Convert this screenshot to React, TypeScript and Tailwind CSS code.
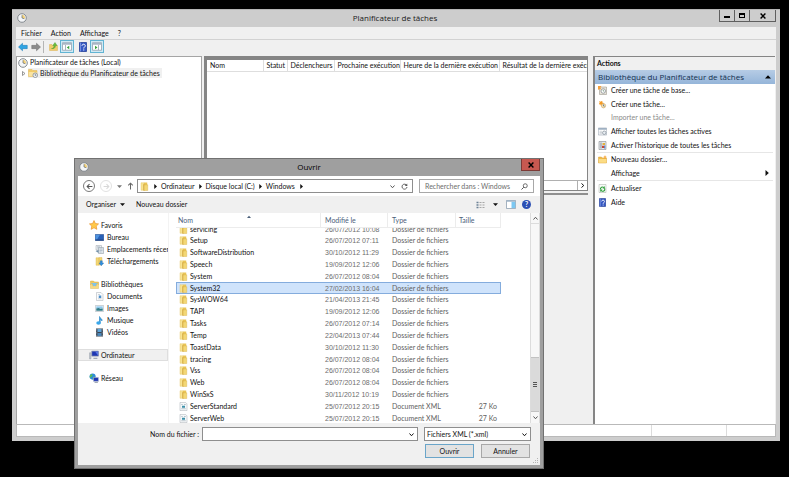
import { clsx } from "clsx";
import * as React from "react";
import { useState } from "react";

type IconProps = { className?: string };

function ClockIcon({ className = "size-[10px]" }: IconProps) {
	return (
		<svg viewBox="0 0 20 20" className={clsx("shrink-0", className)}>
			<circle cx="10" cy="10" r="8.6" fill="#f4f6f8" stroke="#858b90" strokeWidth="2" />
			<path d="M10 10V3.5a6.5 6.5 0 0 1 6 8z" fill="#f3d27c" />
			<path d="M10 4.5V10l4.5 1.5" fill="none" stroke="#5f6a76" strokeWidth="1.4" />
		</svg>
	);
}

function FolderIcon({ className = "size-[9px]" }: IconProps) {
	return (
		<svg viewBox="0 0 18 18" className={clsx("shrink-0", className)}>
			<path d="M2 1.500h6l1 15H2z" fill="#f8e493" stroke="#e2c25c" strokeWidth=".8" />
			<path d="M8 1h6.500v7H8z" fill="#e9c456" />
			<path d="M7.500 6l8-.5V17H7.500z" fill="#f3d774" stroke="#d6ad41" strokeWidth=".8" />
			<path d="M7.500 4v13" stroke="#c99c33" strokeWidth="1.200" />
		</svg>
	);
}

function TaskFolderIcon({ className = "size-[10px]" }: IconProps) {
	return (
		<svg viewBox="0 0 20 20" className={clsx("shrink-0", className)}>
			<path d="M1 3h7l2 2h8v12H1z" fill="#f2cb68" stroke="#dcb255" />
			<path d="M1.5 8h16v8.5h-16z" fill="#fae4a0" />
			<circle cx="14.5" cy="14.5" r="4.6" fill="#eef2f5" stroke="#788088" strokeWidth="1.4" />
			<path d="M14.5 11.8v3h2" fill="none" stroke="#4a5560" strokeWidth="1.2" />
		</svg>
	);
}

function NewFolderIcon({ className = "size-[9px]" }: IconProps) {
	return (
		<svg viewBox="0 0 18 18" className={clsx("shrink-0", className)}>
			<path d="M1 4h6l2 2h8v10H1z" fill="#eebb4a" stroke="#dca23a" />
			<path d="M2 8h14.5v7.5H2z" fill="#fbdc85" />
			<path d="M14 0l1 3 3 1-3 1-1 3-1-3-3-1 3-1z" fill="#f59b25" />
		</svg>
	);
}

function ArrowIcon({ back, className = "size-[10px]" }: IconProps & { back?: boolean }) {
	return (
		<svg viewBox="0 0 20 20" className={clsx("shrink-0", className)}>
			{back ? (
				<path d="M1 10l8-7.5v4.2h9.5v6.6H9v4.2z" fill="#2fa4e3" stroke="#1776b5" />
			) : (
				<path d="M19 10l-8-7.5v4.2H1.5v6.6H11v4.2z" fill="#8c8c8c" stroke="#6d6d6d" />
			)}
		</svg>
	);
}

function UpFolderIcon() {
	return (
		<svg viewBox="0 0 18 18" className="size-[9px] shrink-0">
			<path d="M1 5h5l2 2h9v10H1z" fill="#f0cc6c" stroke="#dcb255" />
			<path d="M5 13c4 0 5-3 5-6H7.500L12 1l4 6h-3c0 5-3 7-8 6z" fill="#6abf3a" stroke="#43932a" strokeWidth=".8" />
		</svg>
	);
}

function PaneIcon({ flip }: { flip?: boolean }) {
	return (
		<svg viewBox="0 0 20 18" className="h-[9px] w-[10px] shrink-0">
			<path d="M1 1.500h18v15H1z" fill="#fff" stroke="#8795a5" strokeWidth="1.4" />
			<path d="M1 1.500h18v4H1z" fill="#a8b6c5" />
			<path d={flip ? "M13 6v10" : "M7 6v10"} stroke="#8795a5" strokeWidth="1.400" />
			<path d={flip ? "M6 7.500l5 3.500-5 3.500z" : "M14.500 7.500l-5 3.500 5 3.500z"} fill="#3aa23a" />
		</svg>
	);
}

function HelpIcon({ className = "h-[10px] w-2" }: IconProps) {
	return (
		<svg viewBox="0 0 16 20" className={clsx("shrink-0", className)}>
			<path d="M1 1h14v18H1z" fill="#3558c4" stroke="#1e3a94" strokeWidth="1.500" />
			<path d="M3 1v18" stroke="#8aa2ea" strokeWidth="1.500" />
			<path d="M6 7.500c0-4 6.500-4 6.500 0 0 2.500-3 2.500-3 5.500M9.500 14.800v2.200" fill="none" stroke="#fff" strokeWidth="2" />
		</svg>
	);
}

function WizardTaskIcon() {
	return (
		<svg viewBox="0 0 18 18" className="size-[9px] shrink-0">
			<path d="M3 2h14v15H3z" fill="#e9e4d8" stroke="#8f8a80" />
			<circle cx="10.500" cy="10" r="4.500" fill="#fff" stroke="#7c848c" strokeWidth="1.400" />
			<path d="M10.500 7.500V10l2 1.500" fill="none" stroke="#475" strokeWidth="1.200" />
			<path d="M0 0h7L4.500 3.500 7 7 3 6 0 8z" fill="#f2a03e" />
		</svg>
	);
}

function NewTaskIcon() {
	return (
		<svg viewBox="0 0 18 18" className="size-[9px] shrink-0">
			<path d="M3 3l3 1 2-2 .5 3.500L12 7 8 8.500 7 12 5 8.500 2 8l2-2z" fill="#f59a23" stroke="#f59a23" />
			<circle cx="11" cy="11.500" r="4.300" fill="#f5dfae" stroke="#c9a566" strokeWidth="1.200" />
			<path d="M11 9v3l2 .5" fill="none" stroke="#2d5d92" strokeWidth="1.300" />
		</svg>
	);
}

function RunningTasksIcon() {
	return (
		<svg viewBox="0 0 18 18" className="size-[9px] shrink-0">
			<path d="M.7 2h16.600v14H.7z" fill="#fff" stroke="#8593a3" />
			<path d="M.7 2h16.600v3.500H.7z" fill="#9fb0c2" />
			<path d="M3 8.500h5M3 11h5M3 13.500h5" stroke="#a0aab5" />
			<circle cx="12.500" cy="11.500" r="3.500" fill="#e8edf2" stroke="#6f7a86" strokeWidth="1.200" />
		</svg>
	);
}

function HistoryIcon() {
	return (
		<svg viewBox="0 0 18 18" className="size-[9px] shrink-0">
			<path d="M2 1h14v16H2z" fill="#e6e9ed" stroke="#85898e" strokeWidth="1.200" />
			<path d="M4 3h4v12H4z" fill="#b4bbc3" />
			<path d="M9 4h5v4H9z" fill="#e0b23c" />
			<path d="M8 9.500h4.500V14H8z" fill="#c74634" />
			<path d="M12.500 9h2v6h-2z" fill="#3c6fc0" />
		</svg>
	);
}

function RefreshIcon() {
	return (
		<svg viewBox="0 0 18 18" className="size-[9px] shrink-0">
			<path d="M2 1h14v16H2z" fill="#f7faf7" stroke="#a5aca5" />
			<path d="M5 11a4 4 0 0 1 7-3.500M13 8.500a4 4 0 0 1-7 4" fill="none" stroke="#2e9e3b" strokeWidth="2.200" />
			<path d="M13.500 4v5H9zM4.500 16v-5H9z" fill="#2e9e3b" />
		</svg>
	);
}

function StarIcon() {
	return (
		<svg viewBox="0 0 18 18" className="size-[10px] shrink-0">
			<path d="M9 1l2.500 5.300 5.700.7-4.200 4 1.100 5.800L9 14l-5.100 2.800L5 11 .8 7l5.700-.7z" fill="#ffc94a" stroke="#e8912a" strokeWidth="1.200" />
		</svg>
	);
}

function DesktopIcon() {
	return (
		<svg viewBox="0 0 18 18" className="size-[9px] shrink-0">
			<path d="M.5 3h17v12H.5z" fill="#2861b8" stroke="#1d3f7c" />
			<path d="M1 3.500h9L4 13H1z" fill="#4f93df" />
			<path d="M1 13h16v2H1z" fill="#24467f" />
		</svg>
	);
}

function RecentIcon() {
	return (
		<svg viewBox="0 0 18 18" className="size-[9px] shrink-0">
			<path d="M2 1h11v9H2z" fill="#eef1f4" stroke="#98a1aa" />
			<path d="M7 5h10v12H7z" fill="#dfe6ec" stroke="#87929d" />
			<path d="M4 3.500h6M4 6h3M9 8h6M9 11h6M9 14h4" stroke="#8ea0b2" />
			<path d="M1 12l6-2v6z" fill="#6f8ea8" />
		</svg>
	);
}

function DownloadsIcon() {
	return (
		<svg viewBox="0 0 18 18" className="size-[9px] shrink-0">
			<path d="M2 1.500h6v15H2zM8 1h6v15H8z" fill="#f3d774" stroke="#dcb44d" strokeWidth=".8" />
			<path d="M10.500 7.500h4V12H17.500l-5 5.500L8 12h2.500z" fill="#2f8fe0" stroke="#1a62ab" strokeWidth=".7" />
		</svg>
	);
}

function LibraryIcon() {
	return (
		<svg viewBox="0 0 18 18" className="size-[9px] shrink-0">
			<path d="M1 2h6l2 2h8v5H1z" fill="#efc95f" stroke="#d8ac48" />
			<path d="M3 6h12v6H3z" fill="#7fc3ea" />
			<path d="M1 8h4l1 5h6l1-5h4v9H1z" fill="#f6db83" stroke="#d6ad48" strokeWidth=".8" />
		</svg>
	);
}

function DocumentIcon() {
	return (
		<svg viewBox="0 0 18 18" className="size-[9px] shrink-0">
			<path d="M3 1h9l4 4v12H3z" fill="#fafbfc" stroke="#a4abb2" />
			<path d="M6 5h4M6 13.500h7" stroke="#9fa9b3" />
			<path d="M7.500 7h5v5h-5z" fill="#4d8fca" />
		</svg>
	);
}

function PictureIcon() {
	return (
		<svg viewBox="0 0 18 18" className="size-[9px] shrink-0">
			<path d="M.8 3h16.400v12H.8z" fill="#fff" stroke="#9aa5af" />
			<path d="M2.500 4.700h13v4.500h-13z" fill="#8fc8ec" />
			<path d="M2.500 9l5-1 3 1.500 5-.5v4.500h-13z" fill="#2e7b86" />
		</svg>
	);
}

function MusicIcon() {
	return (
		<svg viewBox="0 0 18 18" className="size-[9px] shrink-0">
			<path d="M9 1c1 4 6 4 5 9-1-2.500-3-3-3.500-3v7.500H9z" fill="#2f9be0" stroke="#2181c4" strokeWidth="1.200" />
			<ellipse cx="7" cy="14" rx="4.500" ry="3.400" fill="#3aa7ea" />
		</svg>
	);
}

function VideoIcon() {
	return (
		<svg viewBox="0 0 18 18" className="size-[9px] shrink-0">
			<path d="M2 1h14v16H2z" fill="#3a4452" />
			<path d="M5 2h8v6H5z" fill="#5fa5d8" />
			<path d="M5 10h8v6H5z" fill="#4a86b8" />
			<path d="M3.500 2v14M14.500 2v14" stroke="#cfd6dd" strokeWidth="1.200" strokeDasharray="1.500 1.500" />
		</svg>
	);
}

function ComputerIcon() {
	return (
		<svg viewBox="0 0 18 18" className="size-[10px] shrink-0">
			<path d="M5 2h12v9H5z" fill="#1f37b4" stroke="#8d98aa" strokeWidth="1.200" />
			<path d="M11 2.500h5.500v8z" fill="#5a79e2" />
			<path d="M8 14h7v2H8z" fill="#97a2b0" />
			<path d="M1 5h2.500v11H1z" fill="#c2c9d1" stroke="#8a949f" strokeWidth=".8" />
		</svg>
	);
}

function NetworkIcon() {
	return (
		<svg viewBox="0 0 18 18" className="size-[10px] shrink-0">
			<circle cx="6.500" cy="6.500" r="5.500" fill="#2d8bdc" />
			<path d="M3 3c3-2 4 0 3 2S3 7 2 9C1 7 1 5 3 3zM7 8l4-2-1 4-3 2z" fill="#5cc04c" />
			<path d="M8 8h9v7H8z" fill="#1f37b4" stroke="#b4bdc8" />
			<path d="M10 17h6" stroke="#8b95a1" strokeWidth="1.500" />
		</svg>
	);
}

function XmlIcon() {
	return (
		<svg viewBox="0 0 18 18" className="size-[9px] shrink-0">
			<path d="M2 .8h11l3 3v13.400H2z" fill="#f7f9fa" stroke="#a2a9b0" />
			<path d="M4.500 5h3M10 5h3.500M4.500 13.500h9" stroke="#8fa1b0" strokeWidth="1.200" />
			<path d="M6 7.500h6v4H6z" fill="#3b8fa8" />
		</svg>
	);
}

function Chevron({ className = "size-[7px]" }: IconProps) {
	return (
		<svg viewBox="0 0 14 14" className={clsx("shrink-0", className)}>
			<path d="M3 5l4 4.500L11 5" fill="none" stroke="currentColor" strokeWidth="2" />
		</svg>
	);
}

function Triangle({ className = "size-[5px]" }: IconProps) {
	return (
		<svg viewBox="0 0 10 10" className={clsx("shrink-0", className)}>
			<path d="M0 2.500h10L5 8z" fill="currentColor" />
		</svg>
	);
}

const taskColumns = [
	{ label: "Nom", width: "w-[56px]" },
	{ label: "Statut", width: "w-6" },
	{ label: "Déclencheurs", width: "w-[47px]" },
	{ label: "Prochaine exécution", width: "w-[66px]" },
	{ label: "Heure de la dernière exécution", width: "w-[99px]" },
	{ label: "Résultat de la dernière exécution", width: "w-[110px]" },
];

const files = [
	["servicing", "26/07/2012 10:08"],
	["Setup", "26/07/2012 07:11"],
	["SoftwareDistribution", "30/10/2012 11:29"],
	["Speech", "19/09/2012 12:06"],
	["System", "26/07/2012 08:04"],
	["System32", "27/02/2013 16:04"],
	["SysWOW64", "21/04/2013 21:45"],
	["TAPI", "19/09/2012 12:06"],
	["Tasks", "26/07/2012 07:14"],
	["Temp", "22/04/2013 07:44"],
	["ToastData", "30/10/2012 11:30"],
	["tracing", "26/07/2012 08:04"],
	["Vss", "26/07/2012 08:04"],
	["Web", "26/07/2012 08:04"],
	["WinSxS", "30/11/2012 10:19"],
	["ServerStandard", "25/07/2012 20:15", "27 Ko"],
	["ServerWeb", "25/07/2012 20:15", "27 Ko"],
];

const places = [
	{
		label: "Favoris",
		icon: <StarIcon />,
		items: [
			{ label: "Bureau", icon: <DesktopIcon /> },
			{ label: "Emplacements récents", icon: <RecentIcon /> },
			{ label: "Téléchargements", icon: <DownloadsIcon /> },
		],
	},
	{
		label: "Bibliothèques",
		icon: <LibraryIcon />,
		items: [
			{ label: "Documents", icon: <DocumentIcon /> },
			{ label: "Images", icon: <PictureIcon /> },
			{ label: "Musique", icon: <MusicIcon /> },
			{ label: "Vidéos", icon: <VideoIcon /> },
		],
	},
	{ label: "Ordinateur", icon: <ComputerIcon />, items: [], active: true },
	{ label: "Réseau", icon: <NetworkIcon />, items: [] },
];

function ActionItem({
	icon,
	children,
	disabled,
	submenu,
}: {
	icon?: React.ReactNode;
	children: React.ReactNode;
	disabled?: boolean;
	submenu?: boolean;
}) {
	return (
		<button
			type="button"
			disabled={disabled}
			className="flex min-h-3 w-full items-center gap-1 pl-[2px] text-left disabled:text-[#8a8a8a]"
		>
			<span className="flex w-[10px] shrink-0 justify-center">{icon}</span>
			<span className="flex-1">{children}</span>
			{submenu && <Triangle className="mr-[5px] size-[6px] -rotate-90" />}
		</button>
	);
}

function TaskWindow() {
	return (
		<section className="flex flex-1 flex-col border-t border-[#b5b5b5] bg-[#cdcdcd] px-1 pb-1">
			<header className="flex h-[17px] items-start">
				<ClockIcon className="mt-[3px] ml-px size-[10px]" />
				<h1 className="flex-1 pt-[2px] pl-[44px] text-center font-['Open_Sans',sans-serif] text-[8px] leading-[11px] text-[#1a1a1a]">
					Planificateur de tâches
				</h1>
				<div className="flex h-3 border border-t-0 border-[#5f5f5f] text-black">
					<button type="button" aria-label="Réduire" className="flex w-[15px] items-end justify-center border-r border-[#5f5f5f] pb-[3px]">
						<span className="h-[2px] w-[6px] bg-black" />
					</button>
					<button type="button" aria-label="Agrandir" className="flex w-[15px] items-center justify-center border-r border-[#5f5f5f]">
						<span className="h-[5px] w-[6px] border border-t-2 border-black" />
					</button>
					<button type="button" aria-label="Fermer" className="flex w-[25px] items-center justify-center">
						<svg viewBox="0 0 10 10" className="size-[6px]">
							<path d="M1 1l8 8M9 1L1 9" stroke="currentColor" strokeWidth="2.400" />
						</svg>
					</button>
				</div>
			</header>

			<nav className="flex h-[13px] items-center gap-[9px] border-b border-[#d2d2d2] bg-[#f0f0f0] pl-[5px]">
				<button type="button">Fichier</button>
				<button type="button">Action</button>
				<button type="button">Affichage</button>
				<button type="button">?</button>
			</nav>

			<div className="flex h-4 items-start bg-[#f0f0f0] pl-[2px]">
				<button type="button" aria-label="Précédent" className="mt-[2px]"><ArrowIcon back /></button>
				<button type="button" aria-label="Suivant" className="mt-[2px] ml-[3px]"><ArrowIcon /></button>
				<span className="mt-px ml-[2px] h-3 w-px bg-[#b5b5b5]" />
				<button type="button" aria-label="Monter" className="mt-[2px] ml-[5px]"><UpFolderIcon /></button>
				<button type="button" aria-label="Arborescence" className="ml-[2px] flex h-[13px] w-[14px] items-center justify-center border border-[#62b4d3] bg-[#cfeaf5]">
					<PaneIcon />
				</button>
				<button type="button" aria-label="Aide" className="mt-[2px] ml-[5px]"><HelpIcon /></button>
				<button type="button" aria-label="Volet Actions" className="ml-[3px] flex h-[13px] w-[14px] items-center justify-center border border-[#62b4d3] bg-[#cfeaf5]">
					<PaneIcon flip />
				</button>
			</div>

			<div className="flex min-h-0 flex-1 bg-[#f0f0f0] pr-px">
				<aside className="w-[186px] shrink-0 border border-b-0 border-[#a5a5a5] bg-white">
					<div className="flex h-[11px] items-center gap-[2px] pl-px">
						<ClockIcon />
						<span>Planificateur de tâches (Local)</span>
					</div>
					<div className="flex h-[10px] items-center pl-[5px]">
						<svg viewBox="0 0 8 10" className="h-[5px] w-1">
							<path d="M1 1l5 4-5 4z" fill="#fff" stroke="#777" strokeWidth="1.500" />
						</svg>
						<span className="ml-[2px] flex items-center gap-[2px] bg-[#f0f0f0] pr-[2px]">
							<TaskFolderIcon />
							<button type="button" className="leading-[10px]">Bibliothèque du Planificateur de tâches</button>
						</span>
					</div>
				</aside>

				<main className="ml-[2px] flex min-w-0 flex-1 flex-col">
					<div className="flex h-[135px] shrink-0 flex-col overflow-hidden border-t-4 border-r border-b border-l-[3px] border-[#858585] bg-white">
						<div className="overflow-hidden">
							<table className="w-[402px] table-fixed">
								<thead>
									<tr>
										{taskColumns.map((column) => (
											<th
												key={column.label}
												className={clsx(
													"h-[11px] overflow-hidden border-r border-b border-[#dedede] p-0 pl-[3px] text-left leading-[10px] font-normal whitespace-nowrap",
													column.width,
												)}
											>
												{column.label}
											</th>
										))}
									</tr>
								</thead>
							</table>
						</div>
						<div className="mt-auto flex h-[10px] justify-end border-t border-[#b0b0b0] bg-white">
							<button type="button" aria-label="Défiler" className="flex w-[10px] items-center justify-center border-l border-[#b0b0b0]">
								<Chevron className="size-[7px] -rotate-90" />
							</button>
						</div>
					</div>
					<div className="mt-[2px] flex-1 border-t-2 border-l-[3px] border-[#8f8f8f]" />
				</main>

				<aside className="ml-[5px] flex w-[182px] shrink-0 flex-col border-t border-l-2 border-[#858585] bg-white">
					<h2 className="h-[13px] bg-[#f0f0f0] pl-[2px] leading-[13px] font-bold">Actions</h2>
					<button
						type="button"
						className="flex h-[14px] items-center justify-between bg-linear-to-b from-[#b6cce5] to-[#95b5d9] pr-1 pl-[3px] font-['Open_Sans',sans-serif] text-[8px] leading-[14px] text-[#14304f]"
					>
						Bibliothèque du Planificateur de tâches
						<Triangle className="size-[6px] rotate-180 text-black" />
					</button>
					<div className="grid h-[68px] auto-rows-fr">
						<ActionItem icon={<WizardTaskIcon />}>Créer une tâche de base...</ActionItem>
						<ActionItem icon={<NewTaskIcon />}>Créer une tâche...</ActionItem>
						<ActionItem disabled>Importer une tâche...</ActionItem>
						<ActionItem icon={<RunningTasksIcon />}>Afficher toutes les tâches actives</ActionItem>
						<ActionItem icon={<HistoryIcon />}>Activer l'historique de toutes les tâches</ActionItem>
					</div>
					<div className="mx-[2px] border-t border-[#e6e6e6]" />
					<div className="grid h-[27px] auto-rows-fr">
						<ActionItem icon={<NewFolderIcon />}>Nouveau dossier...</ActionItem>
						<ActionItem submenu>Affichage</ActionItem>
					</div>
					<div className="mx-[2px] border-t border-[#e6e6e6]" />
					<div className="grid h-7 auto-rows-fr">
						<ActionItem icon={<RefreshIcon />}>Actualiser</ActionItem>
						<ActionItem icon={<HelpIcon className="h-[9px] w-[7px]" />}>Aide</ActionItem>
					</div>
				</aside>
			</div>

			<footer className="flex h-[13px] border border-[#b9b9b9] bg-white">
				<span className="flex-1" />
				<span className="w-[75px] border-l border-[#dcdcdc]" />
				<span className="w-[49px] border-l border-[#dcdcdc]" />
			</footer>
		</section>
	);
}

function AddressBar() {
	return (
		<div className="flex h-5 items-center bg-white pr-[6px] pl-[5px]">
			<button type="button" aria-label="Précédent" className="flex size-3 items-center justify-center rounded-full border border-[#7c7c7c] text-[#555]">
				<svg viewBox="0 0 12 12" className="size-[7px]">
					<path d="M6 2L2 6l4 4M2 6h9" fill="none" stroke="currentColor" strokeWidth="1.800" />
				</svg>
			</button>
			<button type="button" aria-label="Suivant" className="ml-[5px] flex size-3 items-center justify-center rounded-full border border-[#e2e2e2] text-[#d8d8d8]">
				<svg viewBox="0 0 12 12" className="size-[7px]">
					<path d="M6 2l4 4-4 4M10 6H1" fill="none" stroke="currentColor" strokeWidth="1.800" />
				</svg>
			</button>
			<Triangle className="ml-[5px] size-[5px] text-[#777]" />
			<button type="button" aria-label="Monter" className="ml-[5px] text-[#666]">
				<svg viewBox="0 0 12 14" className="h-2 w-[7px]">
					<path d="M2 6l4-4 4 4M6 2v11" fill="none" stroke="currentColor" strokeWidth="1.800" />
				</svg>
			</button>
			<div className="ml-[3px] flex h-[14px] min-w-0 flex-1 items-center border border-[#8e8e8e] pr-1 pl-[2px]">
				<FolderIcon />
				<Triangle className="mr-[3px] ml-1 size-[5px] -rotate-90" />
				<button type="button">Ordinateur</button>
				<Triangle className="mx-[3px] size-[5px] -rotate-90" />
				<button type="button" className="whitespace-nowrap">Disque local (C:)</button>
				<Triangle className="mx-[3px] size-[5px] -rotate-90" />
				<button type="button">Windows</button>
				<Triangle className="mx-1 size-[5px] -rotate-90" />
				<Chevron className="ml-auto size-[7px] text-[#555]" />
				<button type="button" aria-label="Actualiser" className="ml-[5px]">
					<svg viewBox="0 0 14 14" className="size-[7px] text-[#555]">
						<path d="M11.500 5A5 5 0 1 0 12 8" fill="none" stroke="currentColor" strokeWidth="1.800" />
						<path d="M12.500 1v5h-5z" fill="currentColor" />
					</svg>
				</button>
			</div>
			<label className="ml-[6px] flex h-[14px] w-[115px] items-center border border-[#a8a8a8] px-[5px]">
				<input
					type="text"
					aria-label="Rechercher"
					placeholder="Rechercher dans : Windows"
					className="min-w-0 flex-1 outline-none placeholder:text-[#6d6d6d]"
				/>
				<svg viewBox="0 0 14 14" className="size-[7px] shrink-0 text-[#555]">
					<circle cx="8.500" cy="5.500" r="4" fill="none" stroke="currentColor" strokeWidth="1.700" />
					<path d="M5.500 8.500L1 13" stroke="currentColor" strokeWidth="2" />
				</svg>
			</label>
		</div>
	);
}

function OpenDialog() {
	const [selected, setSelected] = useState("System32");

	return (
		<section
			role="dialog"
			aria-label="Ouvrir"
			className="absolute top-[158px] left-[74px] w-[470px] border border-[#717171] bg-[#9f9f9f] px-[3px] pb-[3px]"
		>
			<header className="flex h-[17px] items-start">
				<ClockIcon className="mt-[3px] ml-px size-[10px]" />
				<h2 className="flex-1 pt-[2px] pl-[8px] text-center font-['Open_Sans',sans-serif] text-[8px] leading-[11px] text-black">
					Ouvrir
				</h2>
				<button type="button" aria-label="Fermer" className="flex h-3 w-[19px] items-center justify-center border border-t-0 border-[#7d3a36] bg-[#c75850] text-black">
					<svg viewBox="0 0 10 10" className="size-[6px]">
						<path d="M1 1l8 8M9 1L1 9" stroke="currentColor" strokeWidth="2.400" />
					</svg>
				</button>
			</header>

			<AddressBar />

			<div className="flex h-[17px] items-center bg-[#f0f0f0] pr-[9px] pl-2">
				<button type="button" className="flex items-center gap-[4px]">
					Organiser
					<Triangle />
				</button>
				<button type="button" className="ml-[11px]">Nouveau dossier</button>
				<button type="button" aria-label="Affichage" className="ml-auto flex items-center gap-2">
					<svg viewBox="0 0 18 16" className="h-2 w-[9px]">
						<path d="M1 3h4M1 8h4M1 13h4" stroke="#6d8296" strokeWidth="2.600" />
						<path d="M7 3h4M13 3h4M7 8h4M13 8h4M7 13h4M13 13h4" stroke="#8f8f8f" strokeWidth="1.500" />
					</svg>
					<Triangle />
				</button>
				<button type="button" aria-label="Volet de visualisation" className="ml-2">
					<svg viewBox="0 0 20 18" className="h-[9px] w-[10px]">
						<path d="M1 1h18v16H1z" fill="#fff" stroke="#7f93a8" strokeWidth="1.400" />
						<path d="M11 3.500h7.500V16H11z" fill="#7cc8f2" />
						<path d="M1 1h18v2.500H1z" fill="#9fb4c8" />
					</svg>
				</button>
				<button type="button" aria-label="Aide" className="ml-[6px] flex size-[9px] items-center justify-center rounded-full bg-[#2c50b4] text-[7px] leading-none font-bold text-white">
					?
				</button>
			</div>

			<div className="flex h-[210px] bg-white">
				<nav className="w-[91px] shrink-0 overflow-hidden border-r border-[#f3f3f3] pt-[6px]">
					<ul className="flex flex-col gap-[11px]">
						{places.map((place) => (
							<li key={place.label}>
								<button
									type="button"
									className={clsx(
										"flex h-3 w-full items-center gap-[2px] pl-[11px]",
										place.active && "bg-[#f0f0f0] outline -outline-offset-1 outline-[#dedede]",
									)}
								>
									<span className="flex w-[10px] justify-center">{place.icon}</span>
									{place.label}
								</button>
								{place.items.map((item) => (
									<button
										key={item.label}
										type="button"
										className="flex h-3 w-full items-center gap-[3px] pl-[17px] whitespace-nowrap"
									>
										{item.icon}
										{item.label}
									</button>
								))}
							</li>
						))}
					</ul>
				</nav>

				<div className="min-w-0 flex-1 overflow-hidden pl-[7px]">
					<table className="h-[211px] w-[325px] table-fixed border-separate border-spacing-0">
						<thead>
							<tr className="h-[15px] text-[#4c607a]">
								<th className="w-[145px] border-r border-b border-[#ececec] p-0 pl-[2px] text-left font-normal">
									<span className="flex">
										Nom
										<Triangle className="ml-[54px] size-1 rotate-180" />
									</span>
								</th>
								<th className="w-[67px] border-r border-b border-[#ececec] p-0 pl-1 text-left font-normal">Modifié le</th>
								<th className="w-[68px] border-r border-b border-[#ececec] p-0 pl-1 text-left font-normal">Type</th>
								<th className="w-[45px] border-r border-b border-[#ececec] p-0 pl-[3px] text-left font-normal">Taille</th>
							</tr>
						</thead>
						<tbody>
							{files.map(([name, modified, size], index) => {
								// the first row is scrolled half way under the header
								const clip = index === 0 ? "flex h-[7px] flex-col justify-end overflow-hidden" : "";
								return (
									<tr
										key={name}
										onClick={() => setSelected(name)}
										className={clsx(
											index === 0 && "h-[7px]",
											name === selected && "bg-[#cfe3fb] outline -outline-offset-1 outline-[#84acdd]",
										)}
									>
										<td className="p-0 pl-[3px]">
											<div className={clip}>
												<span className="flex items-center gap-[2px] leading-[11px]">
													{size ? <XmlIcon /> : <FolderIcon />}
													{name}
												</span>
											</div>
										</td>
										<td className="p-0 pl-1 font-['Liberation_Sans',sans-serif] text-[#6d6d6d]">
											<div className={clip}>
												<span className="leading-[11px]">{modified}</span>
											</div>
										</td>
										<td className="p-0 pl-1 text-[#606060]">
											<div className={clip}>
												<span className="leading-[11px]">{size ? "Document XML" : "Dossier de fichiers"}</span>
											</div>
										</td>
										<td className="p-0 pr-1 text-right text-[#606060]">{size}</td>
									</tr>
								);
							})}
						</tbody>
					</table>
				</div>

				<div className="flex w-[10px] shrink-0 flex-col border-x border-[#dcdcdc] bg-[#f7f7f7]">
					<button type="button" aria-label="Haut" className="flex h-[11px] items-center justify-center border-b border-[#dcdcdc]">
						<Chevron className="size-[7px] rotate-180 text-[#555]" />
					</button>
					<div className="flex-1" />
					<div className="flex h-[55px] items-center justify-center border-y border-[#c2c2c2] bg-[#dadada]">
						<svg viewBox="0 0 4 5" className="h-[5px] w-1">
							<path d="M0 .5h4M0 2.500h4M0 4.500h4" stroke="#555" />
						</svg>
					</div>
					<button type="button" aria-label="Bas" className="flex h-[11px] items-center justify-center">
						<Chevron className="size-[7px] text-[#555]" />
					</button>
				</div>
			</div>

			<form className="relative bg-[#f0f0f0] pt-1 pb-[7px]" onSubmit={(e) => e.preventDefault()}>
				<div className="flex h-[14px] items-center pr-[9px]">
					<label htmlFor="file-name" className="w-[121px] text-right">
						Nom du fichier :
					</label>
					<div className="ml-[3px] flex h-[14px] min-w-0 flex-1 items-center border border-[#8e8e8e] bg-white pr-[2px]">
						<input id="file-name" type="text" className="min-w-0 flex-1 px-[2px] outline-none" />
						<Chevron />
					</div>
					<div className="ml-[6px] grid w-[107px] items-center">
						<select
							aria-label="Type de fichier"
							className="col-start-1 row-start-1 h-[14px] appearance-none border border-[#8e8e8e] bg-white px-[2px] py-0"
						>
							<option>Fichiers XML (*.xml)</option>
						</select>
						<Chevron className="pointer-events-none col-start-1 row-start-1 mr-[3px] size-[7px] justify-self-end" />
					</div>
				</div>
				<div className="mt-[3px] flex justify-end gap-[7px] pr-[10px]">
					<button type="submit" className="h-[14px] w-[49px] border border-[#6aa5c9] bg-[#e2e2e2]">
						Ouvrir
					</button>
					<button type="button" className="h-[14px] w-[49px] border border-[#a8a8a8] bg-[#e2e2e2]">
						Annuler
					</button>
				</div>
				<svg viewBox="0 0 6 6" className="absolute right-px bottom-px size-[6px]">
					<path d="M4 0h1v1H4zM2 2h1v1H2zM4 2h1v1H4zM0 4h1v1H0zM2 4h1v1H2zM4 4h1v1H4z" fill="#b4b4b4" />
				</svg>
			</form>
		</section>
	);
}

export default function App() {
	return (
		<div className="relative flex h-screen flex-col bg-black pt-[9px] pr-[9px] pb-[36px] pl-3 font-[Lato,sans-serif] text-[7px] leading-[11px] text-[#111]">
			<TaskWindow />
			<OpenDialog />
		</div>
	);
}
